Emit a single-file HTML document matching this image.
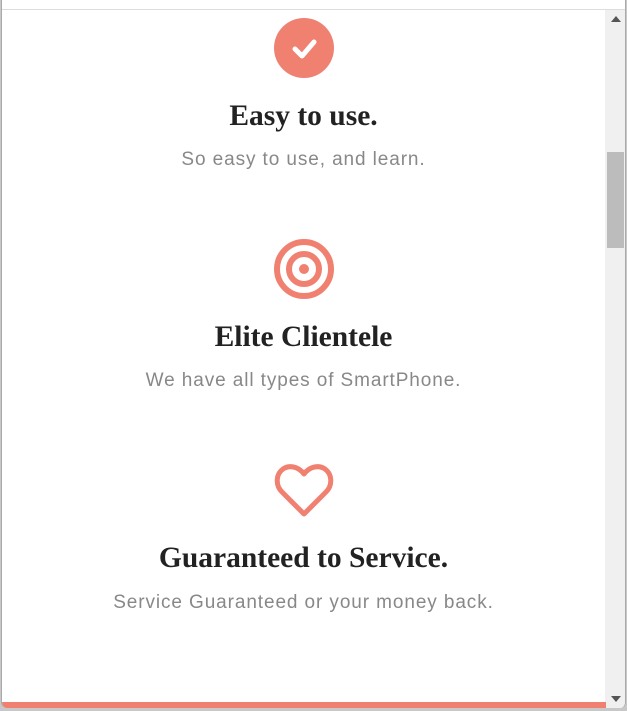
<!DOCTYPE html><html><head><style>
body{margin:0;width:627px;height:711px;background:#c8c8c8;position:relative;overflow:hidden;font-family:"Liberation Sans",sans-serif}
.win{position:absolute;left:1px;top:0;width:625px;height:708px;background:#fff;border-radius:0 0 6px 6px;overflow:hidden;border-left:1px solid #aaa;border-right:1px solid #aaa;box-sizing:border-box}
.top{position:absolute;left:0;top:0;width:100%;height:9px;background:#fff;border-bottom:1px solid #ddd}
.sb{position:absolute;right:0;top:10px;width:20px;bottom:0;background:#f0f0f0}
.thumb{position:absolute;left:2px;top:142px;width:17px;height:96px;background:#bcbcbc}
.bar{position:absolute;left:0;bottom:0;width:604px;height:6px;background:#f08070}
.it{position:absolute;left:0;width:603px;text-align:center}
h2{margin:0;font-family:"Liberation Serif",serif;font-weight:bold;font-size:29.5px;color:#222}
p{margin:0;font-size:19px;letter-spacing:0.9px;color:#888}
</style></head><body><div class="win"><div class="top"></div>
<div class="it" style="top:18px"><svg width="60" height="60" viewBox="0 0 60 60"><circle cx="30" cy="30" r="30" fill="#f08070"/><path d="M21 31l7 7 12-14" stroke="#fff" stroke-width="5" fill="none" stroke-linecap="round" stroke-linejoin="round"/></svg></div>
<div class="it" style="top:100px"><h2>Easy to use.</h2></div>
<div class="it" style="top:149px"><p>So easy to use, and learn.</p></div>
<div class="it" style="top:239px"><svg width="60" height="60" viewBox="0 0 60 60"><circle cx="30" cy="30" r="27" fill="none" stroke="#f08070" stroke-width="6"/><circle cx="30" cy="30" r="15" fill="none" stroke="#f08070" stroke-width="6"/><circle cx="30" cy="30" r="5" fill="#f08070"/></svg></div>
<div class="it" style="top:321px"><h2>Elite Clientele</h2></div>
<div class="it" style="top:370px"><p>We have all types of SmartPhone.</p></div>
<div class="it" style="top:462px"><svg width="60" height="56" viewBox="0 0 60 56"><path d="M30 52L8 30C1 23 2 12 9 7c6-4 15-3 21 5c6-8 15-9 21-5c7 5 8 16 1 23z" fill="none" stroke="#f08070" stroke-width="5" stroke-linejoin="round"/></svg></div>
<div class="it" style="top:542px"><h2>Guaranteed to Service.</h2></div>
<div class="it" style="top:592px"><p>Service Guaranteed or your money back.</p></div>
<div class="sb"><div style="position:absolute;left:6px;top:6px;border:5px solid transparent;border-bottom:6px solid #555;border-top:0"></div><div class="thumb"></div><div style="position:absolute;left:6px;bottom:6px;border:5px solid transparent;border-top:6px solid #555;border-bottom:0"></div></div>
<div class="bar"></div></div></body></html>
